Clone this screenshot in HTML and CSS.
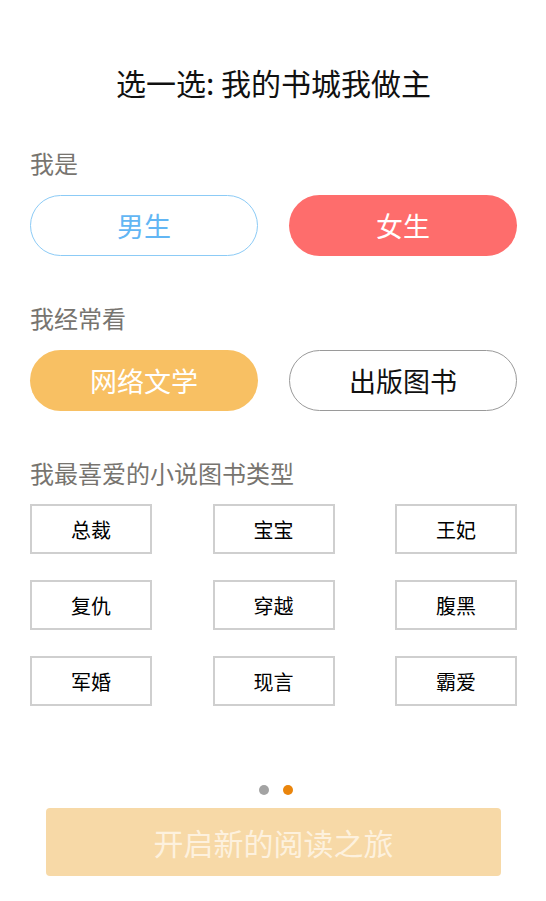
FILE: index.html
```html
<!DOCTYPE html>
<html lang="zh-CN">
<head>
<meta charset="utf-8">
<title>选一选</title>
<link rel="stylesheet" href="styles.css">
</head>
<body>
<div class="page">
  <h1 class="title">选一选: 我的书城我做主</h1>

  <div class="label label-first">我是</div>
  <div class="pill-row">
    <div class="pill pill-male">男生</div>
    <div class="pill pill-female">女生</div>
  </div>

  <div class="label">我经常看</div>
  <div class="pill-row">
    <div class="pill pill-web">网络文学</div>
    <div class="pill pill-print">出版图书</div>
  </div>

  <div class="label">我最喜爱的小说图书类型</div>
  <div class="tags">
    <div class="tag">总裁</div>
    <div class="tag">宝宝</div>
    <div class="tag">王妃</div>
    <div class="tag">复仇</div>
    <div class="tag">穿越</div>
    <div class="tag">腹黑</div>
    <div class="tag">军婚</div>
    <div class="tag">现言</div>
    <div class="tag">霸爱</div>
  </div>

  <div class="dots">
    <span class="dot"></span>
    <span class="dot dot-active"></span>
  </div>

  <div class="start">开启新的阅读之旅</div>
</div>
</body>
</html>
```

FILE: styles.css
```css
* { box-sizing: border-box; }

html, body {
  margin: 0;
  padding: 0;
  background: #ffffff;
}

body {
  font-family: "Noto Sans CJK SC", "Noto Sans", sans-serif;
  color: #111111;
}

.page {
  width: 546px;
  padding: 0 29px 0 30px;
}

.title {
  margin: 62px 0 0;
  height: 40px;
  line-height: 40px;
  font-size: 30px;
  font-weight: 400;
  text-align: center;
  color: #111111;
}

.label {
  margin-top: 49px;
  height: 30px;
  line-height: 26px;
  font-size: 24px;
  color: #77746f;
}

.label-first {
  margin-top: 48px;
}

.pill-row {
  margin-top: 15px;
  display: flex;
  justify-content: space-between;
}

.pill {
  width: 228px;
  height: 61px;
  border-radius: 31px;
  display: flex;
  align-items: center;
  justify-content: center;
  font-size: 27px;
}

.pill-male {
  border: 1px solid #8ccbf6;
  color: #62b6f4;
}

.pill-female {
  background: #fe6d6c;
  color: #ffffff;
}

.pill-web {
  background: #f8c063;
  color: #ffffff;
}

.pill-print {
  border: 1px solid #9a9a9a;
  color: #111111;
}

.tags {
  margin-top: 14px;
  display: grid;
  grid-template-columns: 122px 122px 122px;
  justify-content: space-between;
  row-gap: 26px;
}

.tag {
  height: 50px;
  border: 2px solid #cfcfcf;
  display: flex;
  align-items: center;
  justify-content: center;
  font-size: 20px;
  font-weight: 400;
  color: #000000;
}

.dots {
  margin-top: 79px;
  display: flex;
  justify-content: center;
  gap: 14px;
  height: 10px;
  padding-left: 4px;
}

.dot {
  width: 10px;
  height: 10px;
  border-radius: 50%;
  background: #a3a3a3;
}

.dot-active {
  background: #ea850c;
}

.start {
  margin: 13px 16px 0 16px;
  height: 68px;
  border-radius: 4px;
  background: #f7d9a7;
  color: #fdf1de;
  font-size: 30px;
  display: flex;
  align-items: center;
  justify-content: center;
}
```
